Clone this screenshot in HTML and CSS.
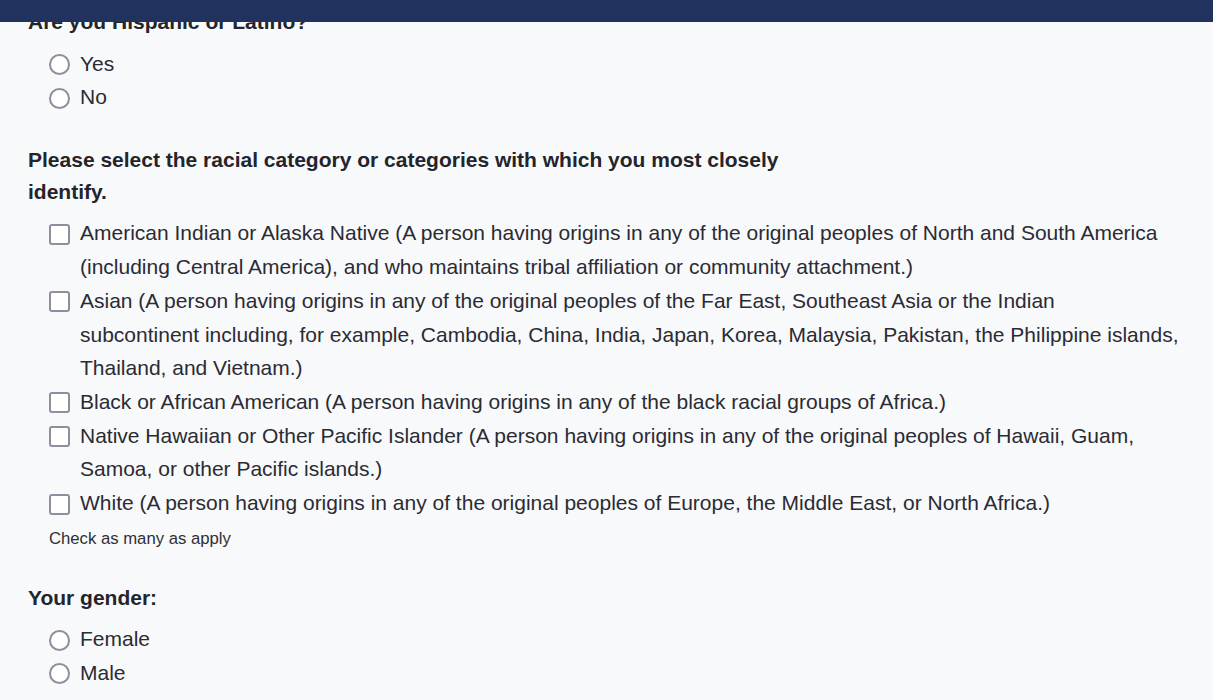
FILE: index.html
```html
<!DOCTYPE html>
<html lang="en">
<head>
<meta charset="utf-8">
<title>Demographics</title>
<link rel="stylesheet" href="styles.css">
</head>
<body>
<header class="topbar"></header>
<main class="form">
  <fieldset class="question">
    <legend class="question-title">Are you Hispanic or Latino?</legend>
    <div class="options">
      <label class="option"><input type="radio" name="hisp" class="radio"><span class="option-text">Yes</span></label>
      <label class="option"><input type="radio" name="hisp" class="radio"><span class="option-text">No</span></label>
    </div>
  </fieldset>

  <fieldset class="question">
    <legend class="question-title narrow">Please select the racial category or categories with which you most closely identify.</legend>
    <div class="options">
      <label class="option"><input type="checkbox" class="checkbox"><span class="option-text">American Indian or Alaska Native (A person having origins in any of the original peoples of North and South America (including Central America), and who maintains tribal affiliation or community attachment.)</span></label>
      <label class="option"><input type="checkbox" class="checkbox"><span class="option-text">Asian (A person having origins in any of the original peoples of the Far East, Southeast Asia or the Indian subcontinent including, for example, Cambodia, China, India, Japan, Korea, Malaysia, Pakistan, the Philippine islands, Thailand, and Vietnam.)</span></label>
      <label class="option"><input type="checkbox" class="checkbox"><span class="option-text">Black or African American (A person having origins in any of the black racial groups of Africa.)</span></label>
      <label class="option"><input type="checkbox" class="checkbox"><span class="option-text">Native Hawaiian or Other Pacific Islander (A person having origins in any of the original peoples of Hawaii, Guam, Samoa, or other Pacific islands.)</span></label>
      <label class="option"><input type="checkbox" class="checkbox"><span class="option-text">White (A person having origins in any of the original peoples of Europe, the Middle East, or North Africa.)</span></label>
    </div>
    <p class="help">Check as many as apply</p>
  </fieldset>

  <fieldset class="question">
    <legend class="question-title">Your gender:</legend>
    <div class="options">
      <label class="option"><input type="radio" name="gender" class="radio"><span class="option-text">Female</span></label>
      <label class="option"><input type="radio" name="gender" class="radio"><span class="option-text">Male</span></label>
    </div>
  </fieldset>
</main>
</body>
</html>
```

FILE: styles.css
```css
* { box-sizing: border-box; }

html, body {
  margin: 0;
  padding: 0;
  background: #f8f9fb;
  font-family: "Liberation Sans", Arial, sans-serif;
  color: #2b2b33;
}

.topbar {
  position: fixed;
  top: 0;
  left: 0;
  right: 0;
  height: 22px;
  background: #21325e;
  z-index: 10;
}

.form {
  padding: 6px 28px 0 28px;
  display: flex;
  flex-direction: column;
  gap: 30.5px;
}

.question {
  border: 0;
  margin: 0;
  padding: 0;
  min-width: 0;
}

.question-title {
  padding: 0;
  font-size: 21px;
  font-weight: bold;
  line-height: 31.5px;
  color: #24242b;
}

.question-title.narrow {
  max-width: 780px;
}

.options {
  margin-top: 9px;
  padding-left: 20.5px;
  display: flex;
  flex-direction: column;
}

.option {
  display: flex;
  align-items: flex-start;
  gap: 10.5px;
  font-size: 21px;
  line-height: 33.7px;
  cursor: pointer;
}

.radio,
.checkbox {
  appearance: none;
  -webkit-appearance: none;
  flex: 0 0 auto;
  width: 21px;
  height: 21px;
  margin: 7.5px 0 0 0;
  border: 2.7px solid #8f8da0;
  background: #ffffff;
}

.radio { border-radius: 50%; }
.checkbox { border-radius: 3px; }

.option-text {
  flex: 1 1 auto;
  max-width: 1099px;
}

.help {
  margin: 7.5px 0 0 21px;
  font-size: 16.7px;
  line-height: 24px;
  color: #2e2e36;
}
```
